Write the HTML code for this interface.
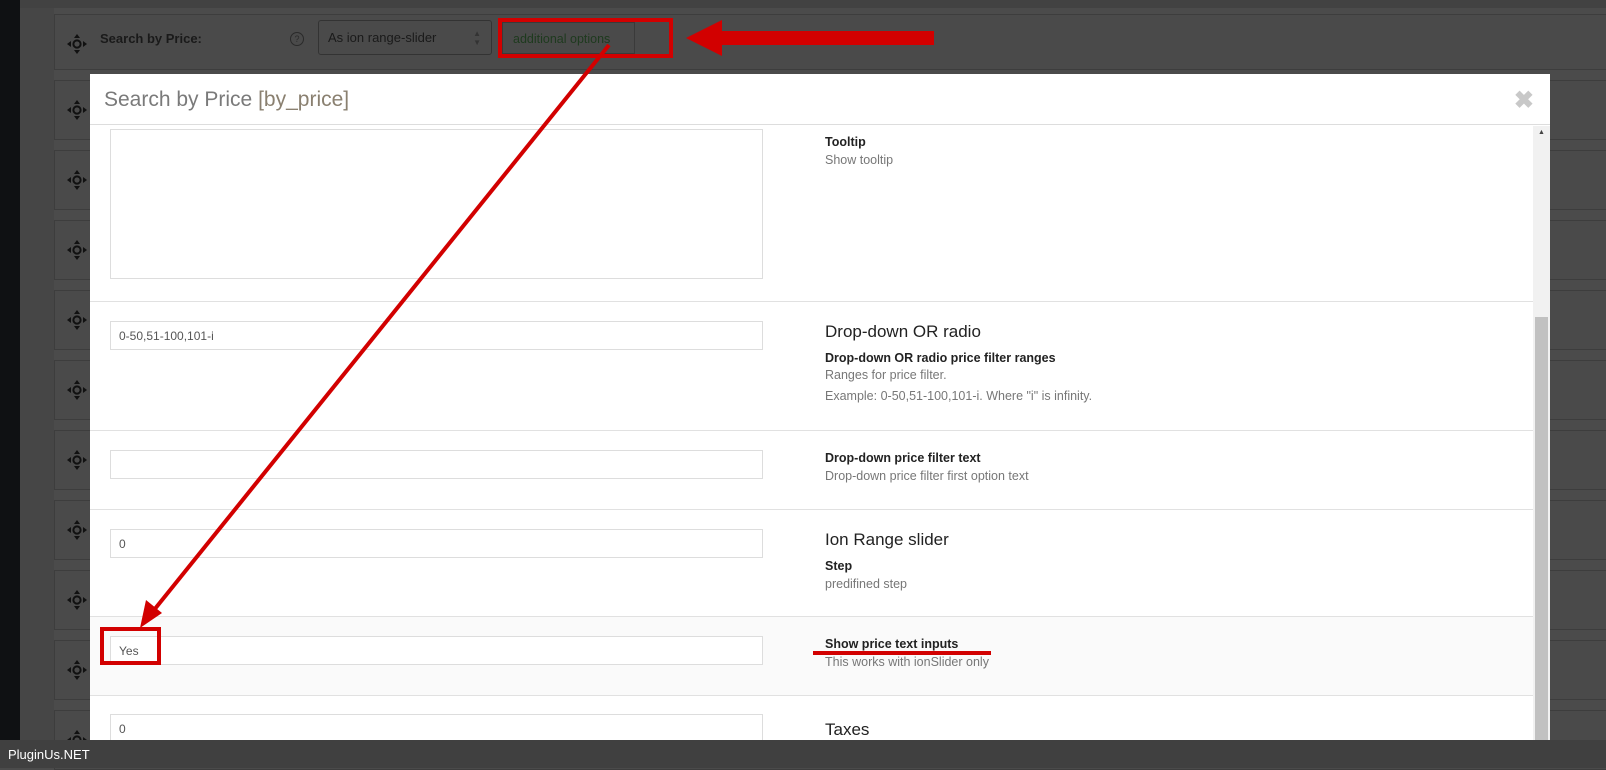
<!DOCTYPE html>
<html><head><meta charset="utf-8"><style>
*{box-sizing:border-box;margin:0;padding:0}
body{width:1606px;height:768px;overflow:hidden;background:#4b4b4b;font-family:"Liberation Sans",sans-serif;position:relative}
.abs{position:absolute}
.side{left:0;top:0;width:20px;height:768px;background:#0f1113}
.side2{left:20px;top:0;width:34px;height:768px;background:#464646}
.topbar{left:20px;top:0;width:1586px;height:8px;background:#424242}
.row{position:absolute;left:54px;width:1560px;height:60px;background:#4a4a4a;border:1px solid #3d3d3d}
.drag{position:absolute;left:11px;top:18px}
.modal{left:90px;top:74px;width:1460px;height:666px;background:#fff;overflow:hidden}
.mh{height:51px;border-bottom:1px solid #ddd;padding:14px 14px;font-size:21px;color:#7a7a7a;font-weight:300}
.sec{position:absolute;left:0;width:1443px;border-bottom:1px solid #e1e1e1}
.inp{position:absolute;left:20px;width:653px;height:29px;border:1px solid #ddd;font-size:12px;color:#555;padding:7px 8px}
.rt{position:absolute;left:735px;color:#333}
.h{font-size:17px;color:#222}
.b{font-size:12.5px;font-weight:bold;color:#222}
.t{font-size:12.5px;color:#777}
</style></head><body>
<svg width="0" height="0" style="position:absolute"><defs><symbol id="d" viewBox="0 0 22 22"><polygon points="11,1 8,5 14,5" fill="#111"/><polygon points="11,21 8,17 14,17" fill="#111"/><polygon points="1,11 5,8 5,14" fill="#111"/><polygon points="21,11 17,8 17,14" fill="#111"/><circle cx="11" cy="11" r="3.6" fill="none" stroke="#111" stroke-width="2"/></symbol></defs></svg>
<div class="abs side"></div><div class="abs side2"></div><div class="abs topbar"></div>
<div class="row" style="top:14px;height:56px"><svg class="drag" width="22" height="22"><use href="#d"/></svg></div>
<div class="row" style="top:80px"><svg class="drag" width="22" height="22"><use href="#d"/></svg></div>
<div class="row" style="top:150px"><svg class="drag" width="22" height="22"><use href="#d"/></svg></div>
<div class="row" style="top:220px"><svg class="drag" width="22" height="22"><use href="#d"/></svg></div>
<div class="row" style="top:290px"><svg class="drag" width="22" height="22"><use href="#d"/></svg></div>
<div class="row" style="top:360px"><svg class="drag" width="22" height="22"><use href="#d"/></svg></div>
<div class="row" style="top:430px"><svg class="drag" width="22" height="22"><use href="#d"/></svg></div>
<div class="row" style="top:500px"><svg class="drag" width="22" height="22"><use href="#d"/></svg></div>
<div class="row" style="top:570px"><svg class="drag" width="22" height="22"><use href="#d"/></svg></div>
<div class="row" style="top:640px"><svg class="drag" width="22" height="22"><use href="#d"/></svg></div>
<div class="row" style="top:710px"><svg class="drag" width="22" height="22"><use href="#d"/></svg></div>
<div class="abs" style="left:100px;top:31px;font-size:13px;font-weight:bold;color:#1a1a1a">Search by Price:</div>
<div class="abs" style="left:290px;top:32px;width:14px;height:14px;border:1px solid #2a2a2a;border-radius:50%;font-size:9px;color:#2a2a2a;text-align:center;line-height:12px">?</div>
<div class="abs" style="left:318px;top:20px;width:174px;height:35px;border:1px solid #333;border-radius:3px;font-size:13px;color:#1a1a1a;padding:9px 9px">As ion range-slider<span style="position:absolute;right:10px;top:8px;font-size:8px;line-height:9px;color:#333">▲<br>▼</span></div>
<div class="abs" style="left:502px;top:22px;width:133px;height:32px;border:1px solid #3a3a3a;font-size:12.5px;color:#1e3a1e;padding:9px 10px">additional options</div>
<div class="abs" style="left:498px;top:18px;width:175px;height:40px;border:4px solid #d20000"></div>
<div class="abs" style="left:718px;top:31px;width:216px;height:14px;background:#d20000"></div>
<div class="abs" style="left:686px;top:20px;width:0;height:0;border-top:18px solid transparent;border-bottom:18px solid transparent;border-right:36px solid #d20000"></div>
<div class="abs modal">
<div class="mh">Search by Price <span style="color:#8a8070">[by_price]</span></div>
<div class="abs" style="right:16px;top:12px;font-size:24px;color:#c8c8c8;font-weight:bold">✖</div>
<div class="sec" style="top:51px;height:177px"><div class="inp" style="top:4px;height:150px"></div><div class="rt" style="top:10px"><div class="b">Tooltip</div><div class="t" style="margin-top:4px">Show tooltip</div></div></div>
<div class="sec" style="top:228px;height:129px"><div class="inp" style="top:19px">0-50,51-100,101-i</div><div class="rt" style="top:20px"><div class="h">Drop-down OR radio</div><div class="b" style="margin-top:9px">Drop-down OR radio price filter ranges</div><div class="t" style="margin-top:3px">Ranges for price filter.</div><div class="t" style="margin-top:7px">Example: 0-50,51-100,101-i. Where "i" is infinity.</div></div></div>
<div class="sec" style="top:357px;height:79px"><div class="inp" style="top:19px"></div><div class="rt" style="top:20px"><div class="b">Drop-down price filter text</div><div class="t" style="margin-top:4px">Drop-down price filter first option text</div></div></div>
<div class="sec" style="top:436px;height:107px"><div class="inp" style="top:19px">0</div><div class="rt" style="top:20px"><div class="h">Ion Range slider</div><div class="b" style="margin-top:9px">Step</div><div class="t" style="margin-top:4px">predifined step</div></div></div>
<div class="sec" style="top:543px;height:79px;background:#fafafa"><div class="inp" style="top:19px;background:#fff">Yes</div><div class="rt" style="top:20px"><div class="b">Show price text inputs</div><div class="t" style="margin-top:4px">This works with ionSlider only</div></div></div>
<div class="sec" style="top:622px;height:60px"><div class="inp" style="top:18px">0</div><div class="rt" style="top:24px"><div class="h">Taxes</div></div></div>
<div class="abs" style="left:1443px;top:52px;width:17px;height:614px;background:#f1f1f1"><div style="font-size:7px;color:#444;text-align:center;margin-top:3px">▲</div><div class="abs" style="left:2px;top:191px;width:13px;height:430px;background:#c1c1c1"></div></div>
</div>
<div class="abs" style="left:100px;top:627px;width:61px;height:38px;border:4px solid #d20000"></div>
<div class="abs" style="left:813px;top:651px;width:178px;height:4px;background:#d20000"></div>
<svg class="abs" style="left:0;top:0" width="1606" height="768"><line x1="609" y1="45" x2="150" y2="615" stroke="#d20000" stroke-width="4"/><polygon points="140,628 146,600 162,613" fill="#d20000"/></svg>
<div class="abs" style="left:0;top:740px;width:1606px;height:28px;background:#404040;color:#fff;font-size:13px;padding:7px 8px">PluginUs.NET</div>
</body></html>
